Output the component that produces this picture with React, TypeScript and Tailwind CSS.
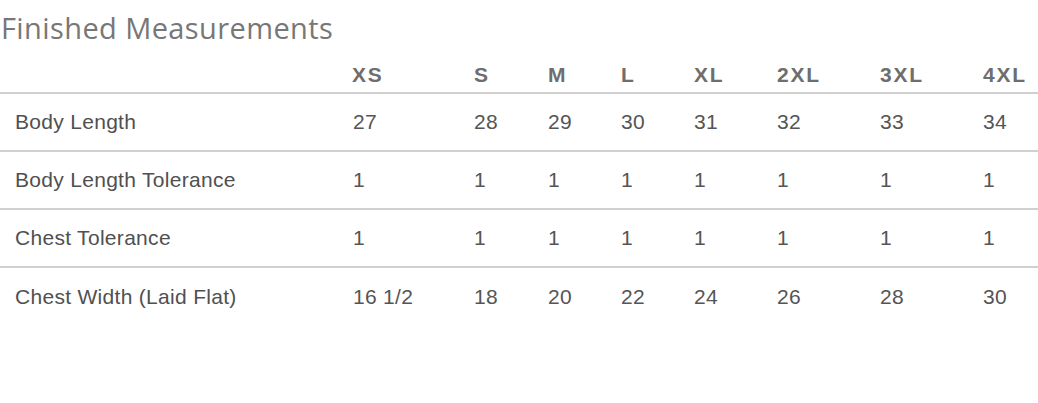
const sizes = ["XS", "S", "M", "L", "XL", "2XL", "3XL", "4XL"];

const rows: { label: string; values: string[] }[] = [
  { label: "Body Length", values: ["27", "28", "29", "30", "31", "32", "33", "34"] },
  { label: "Body Length Tolerance", values: ["1", "1", "1", "1", "1", "1", "1", "1"] },
  { label: "Chest Tolerance", values: ["1", "1", "1", "1", "1", "1", "1", "1"] },
  { label: "Chest Width (Laid Flat)", values: ["16 1/2", "18", "20", "22", "24", "26", "28", "30"] },
];

const cols = "grid grid-cols-[352px_122px_74px_73px_73px_83px_103px_103px_1fr]";

export default function App() {
  return (
    <div className="w-[1038px] h-[403px] bg-white overflow-hidden font-['Liberation_Sans',Arial,sans-serif]">
      <h1 className="pl-[1px] pt-[10px] h-[50px] text-[29px] leading-[36px] tracking-[0.4px] text-[#777] font-['Open_Sans',sans-serif] font-normal">
        Finished Measurements
      </h1>
      <div className={`${cols} h-[44px] items-center border-b-2 border-[#d0d0d0] text-[21px] font-bold tracking-[1.8px] text-[#6e6e6e]`}>
        <div />
        {sizes.map((s) => (
          <div key={s} className="pt-[7px]">{s}</div>
        ))}
      </div>
      {rows.map((r) => (
        <div
          key={r.label}
          className={`${cols} h-[58px] items-center border-b-2 border-[#d0d0d0] text-[21px] tracking-[0.3px] text-[#555] last:border-b-0`}
        >
          <div className="pl-[15px] text-[#505050]">{r.label}</div>
          {r.values.map((v, i) => (
            <div key={i} className={i === 0 ? "pl-[1px]" : ""}>{v}</div>
          ))}
        </div>
      ))}
    </div>
  );
}
